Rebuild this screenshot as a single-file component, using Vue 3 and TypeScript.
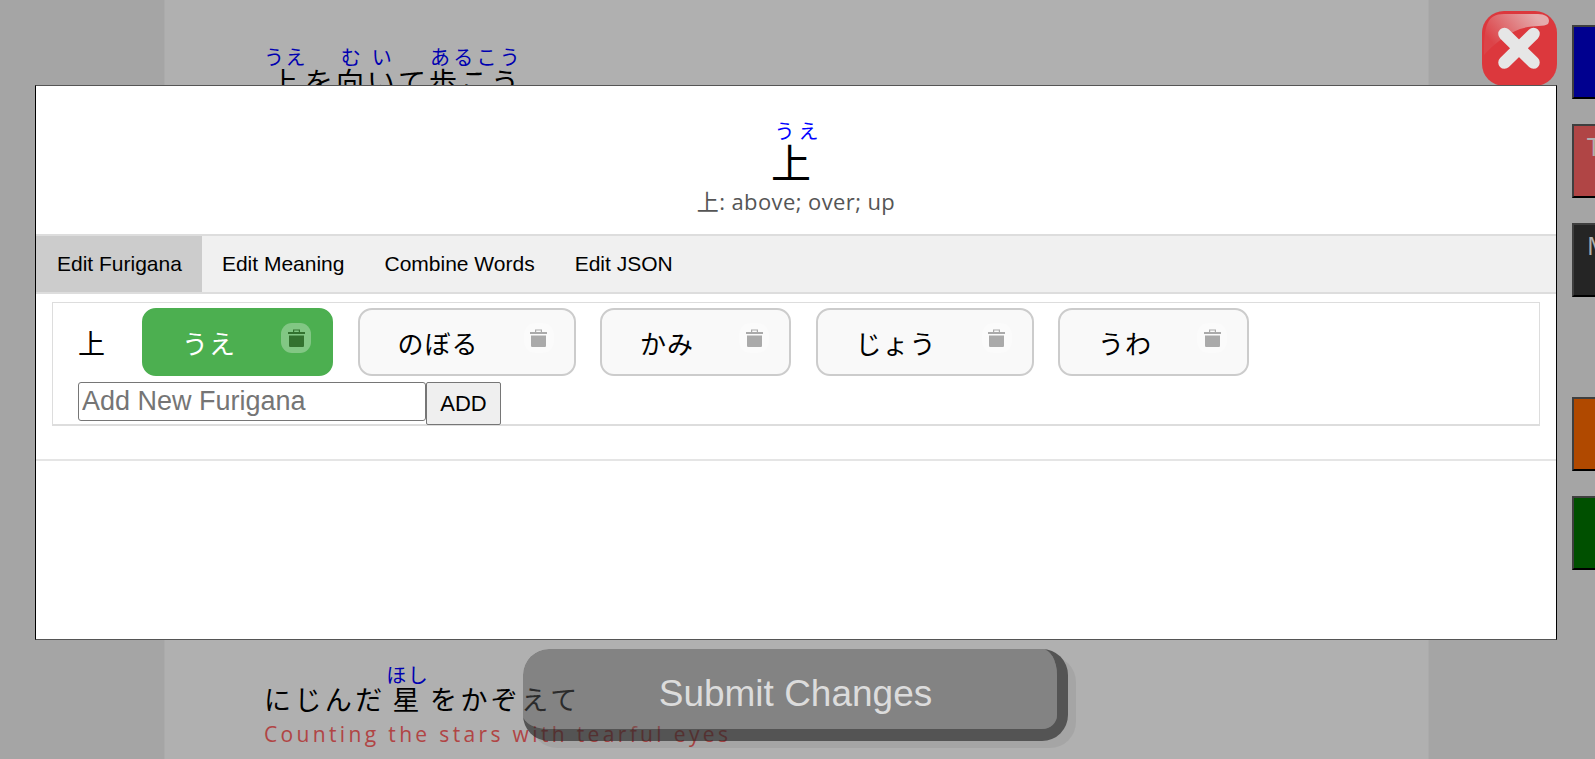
<template>
  <div class="page">
    <main class="song">
      <div class="lyric lyric-top">
        <div class="line">
          <ruby class="first">上<rt>うえ</rt></ruby>を<ruby>向い<rt>むい</rt></ruby>て<ruby>歩こう<rt>あるこう</rt></ruby>
        </div>
      </div>
      <div class="lyric lyric-bottom">
        <div class="line">
          にじんだ<ruby class="star">星<rt>ほし</rt></ruby>をかぞえて
        </div>
        <div class="translation">Counting the stars with tearful eyes</div>
      </div>
    </main>

    <aside class="side-buttons">
      <div
        v-for="b in sideButtons"
        :key="b.color"
        class="side-btn"
        :class="{ gap: b.gap }"
        :style="{ background: b.color, paddingLeft: b.pad + 'px' }"
      >
        {{ b.label }}
      </div>
    </aside>

    <div class="backdrop"></div>

    <button class="submit">Submit Changes</button>

    <button class="close" aria-label="Close">
      <svg viewBox="0 0 75 75" width="75" height="75">
        <defs>
          <linearGradient id="gloss" gradientUnits="userSpaceOnUse" x1="52" y1="3" x2="14" y2="36">
            <stop offset="0" stop-color="#e4acad" />
            <stop offset="1" stop-color="#dc4348" />
          </linearGradient>
        </defs>
        <rect x="0" y="0" width="75" height="75" rx="22" fill="#dc383d" />
        <path d="M2 44 C2 14 5 3 22 3 L56 3 C65 3 69 8 66 13 C62 16 50 14 38 18 C24 23 10 35 2 44 Z" fill="url(#gloss)" />
        <path d="M22.5 23 L51.5 51.5 M51.5 23 L22.5 51.5" stroke="#e6e6e6" stroke-width="12.5" stroke-linecap="round" fill="none" />
      </svg>
    </button>

    <section class="modal">
      <header class="word">
        <ruby class="word-main">上<rt>うえ</rt></ruby>
        <div class="word-meaning">上: above; over; up</div>
      </header>

      <nav class="tabs">
        <div v-for="(t, i) in tabs" :key="t" class="tab" :class="{ active: i === 0 }">{{ t }}</div>
      </nav>

      <div class="tab-body">
        <div class="furigana-panel">
          <div class="chip-row">
            <span class="kanji">上</span>
            <div v-for="(f, i) in readings" :key="f" class="chip" :class="{ selected: i === 0 }">
              <span>{{ f }}</span>
              <span class="trash">
                <svg viewBox="0 0 17 18" width="17" height="18">
                  <path fill-rule="evenodd" d="M5 0.5 H12 V3 H17 V5 H0 V3 H5 Z M6.2 1.6 V3 H10.8 V1.6 Z" />
                  <path d="M1 6.5 H16 V16.5 C16 17.5 15.5 18 14.5 18 H2.5 C1.5 18 1 17.5 1 16.5 Z" />
                </svg>
              </span>
            </div>
          </div>
          <div class="add-row">
            <input class="add-input" type="text" placeholder="Add New Furigana" />
            <button class="add-btn">ADD</button>
          </div>
        </div>
      </div>
    </section>
  </div>
</template>

<script setup lang="ts">
const tabs = ['Edit Furigana', 'Edit Meaning', 'Combine Words', 'Edit JSON']
const readings = ['うえ', 'のぼる', 'かみ', 'じょう', 'うわ']

const sideButtons = [
  { label: '', color: '#0000cf', gap: false, pad: 10 },
  { label: 'T', color: '#ff6464', gap: false, pad: 13 },
  { label: 'M', color: '#363636', gap: false, pad: 13 },
  { label: '', color: '#ff6b00', gap: true, pad: 10 },
  { label: '', color: '#007400', gap: false, pad: 10 },
]
</script>

<style>
html,
body {
  margin: 0;
  overflow: hidden;
}
</style>

<style scoped>
.page {
  position: relative;
  width: 1595px;
  height: 759px;
  overflow: hidden;
  background: #f0f0f0;
  font-family: "Open Sans", "Noto Sans CJK JP", sans-serif;
}

.song {
  box-sizing: border-box;
  width: 1264px;
  height: 759px;
  margin: 0 auto;
  padding: 47px 0 0 100px;
  background: #fff;
  display: flex;
  flex-direction: column;
  justify-content: space-between;
  transform: translateX(-1.5px);
}

.lyric {
  font-family: "Noto Sans CJK JP", sans-serif;
}

.line {
  font-size: 28px;
  line-height: 40px;
  letter-spacing: 3px;
}

.line rt {
  color: #0000ff;
  font-size: 20px;
  letter-spacing: 1.5px;
}

.first {
  margin-right: 4px;
}

.lyric-bottom {
  padding-bottom: 10px;
}

.lyric-bottom .line {
  font-size: 27px;
  letter-spacing: 3.4px;
}

.star {
  margin: 0 7px;
}

.translation {
  font-family: "Open Sans", sans-serif;
  font-size: 21px;
  line-height: 30px;
  letter-spacing: 3.35px;
  color: #ff6464;
}

.backdrop {
  position: absolute;
  inset: 0;
  background: rgba(0, 0, 0, 0.31);
}

.submit {
  position: absolute;
  left: 523px;
  top: 649px;
  box-sizing: border-box;
  width: 545px;
  height: 92px;
  padding: 10px 0 0 11px;
  border-style: solid;
  border-width: 0 11px 12px 0;
  border-color: rgba(40, 40, 40, 0.68);
  border-radius: 26px;
  font-family: "Liberation Sans", Arial, sans-serif;
  font-size: 37px;
  color: #dcdcdc;
  background: rgba(85, 85, 85, 0.5);
  background-clip: padding-box;
  box-shadow: 8px 7px 0 rgba(0, 0, 0, 0.06);
}

.side-buttons {
  position: absolute;
  left: 1572px;
  top: 25px;
  display: flex;
  flex-direction: column;
  gap: 25px;
}

.side-btn {
  box-sizing: border-box;
  width: 60px;
  height: 74px;
  padding-top: 3px;
  border: 2px solid #5c5c5c;
  border-bottom-color: #000;
  font-family: "Open Sans", sans-serif;
  font-size: 25px;
  line-height: 34px;
  color: #fff;
}

.side-btn.gap {
  margin-top: 75px;
}

.close {
  position: absolute;
  left: 1482px;
  top: 11px;
  width: 75px;
  height: 75px;
  padding: 0;
  border: 0;
  background: none;
}

.close svg {
  display: block;
}

.modal {
  position: absolute;
  left: 35px;
  top: 85px;
  box-sizing: border-box;
  width: 1522px;
  height: 555px;
  background: #fff;
  border: 1px solid #000;
  border-top-color: #555;
  border-bottom-color: #555;
}

.word {
  height: 148px;
  padding-top: 35px;
  box-sizing: border-box;
  text-align: center;
}

.word-main {
  margin-right: 10px;
  font-family: "Noto Sans CJK JP", sans-serif;
  font-size: 40px;
  line-height: 40px;
}

.word-main rt {
  padding-left: 15px;
  font-size: 20px;
  letter-spacing: 4px;
  color: #0000ff;
}

.word-meaning {
  margin-top: 3px;
  font-size: 22px;
  line-height: 30px;
  letter-spacing: 0.4px;
  color: #555;
}

.tabs {
  display: flex;
  height: 60px;
  box-sizing: border-box;
  border-top: 2px solid #ddd;
  border-bottom: 2px solid #ddd;
  background: #f0f0f0;
}

.tab {
  display: flex;
  align-items: center;
  padding: 0 20px;
  font-family: "Liberation Sans", Arial, sans-serif;
  font-size: 21px;
  color: #000;
}

.tab.active {
  padding-left: 21px;
  background: #ccc;
}

.tab-body {
  box-sizing: border-box;
  height: 167px;
  padding: 8px 16px 0;
  border-bottom: 2px solid #e5e5e5;
}

.furigana-panel {
  box-sizing: border-box;
  height: 124px;
  padding: 5px 25px 0;
  border: 1px solid #ddd;
  border-bottom-width: 2px;
}

.chip-row {
  display: flex;
  align-items: center;
  gap: 24.5px;
}

.kanji {
  width: 39.5px;
  font-family: "Noto Sans CJK JP", sans-serif;
  font-size: 27px;
}

.chip {
  position: relative;
  box-sizing: border-box;
  height: 68px;
  padding: 0 95px 0 38px;
  display: flex;
  align-items: center;
  border: 2px solid #ccc;
  border-radius: 14px;
  background: #f9f9f9;
  font-family: "Noto Sans CJK JP", sans-serif;
  font-size: 26px;
  letter-spacing: 1px;
  color: #000;
}

.chip.selected {
  border-color: #4caf50;
  background: #4caf50;
  color: #fff;
}

.trash {
  position: absolute;
  top: 13px;
  right: 20px;
  width: 30px;
  height: 30px;
  display: flex;
  align-items: center;
  justify-content: center;
  border-radius: 11px;
  background: rgba(255, 255, 255, 0.3);
}

.trash svg {
  fill: #aaa;
}

.chip.selected .trash svg {
  fill: #33722f;
}

.add-row {
  display: flex;
  align-items: flex-start;
  margin-top: 6px;
}

.add-input {
  box-sizing: border-box;
  width: 348px;
  height: 39px;
  padding: 1px 3px;
  border: 1px solid #767676;
  border-radius: 3px;
  font-family: "Liberation Sans", Arial, sans-serif;
  font-size: 27px;
}

.add-input::placeholder {
  color: #757575;
}

.add-btn {
  box-sizing: border-box;
  width: 75px;
  height: 43px;
  padding: 0;
  border: 1px solid #767676;
  border-radius: 2px;
  background: #efefef;
  font-family: "Liberation Sans", Arial, sans-serif;
  font-size: 22px;
  color: #000;
}
</style>
